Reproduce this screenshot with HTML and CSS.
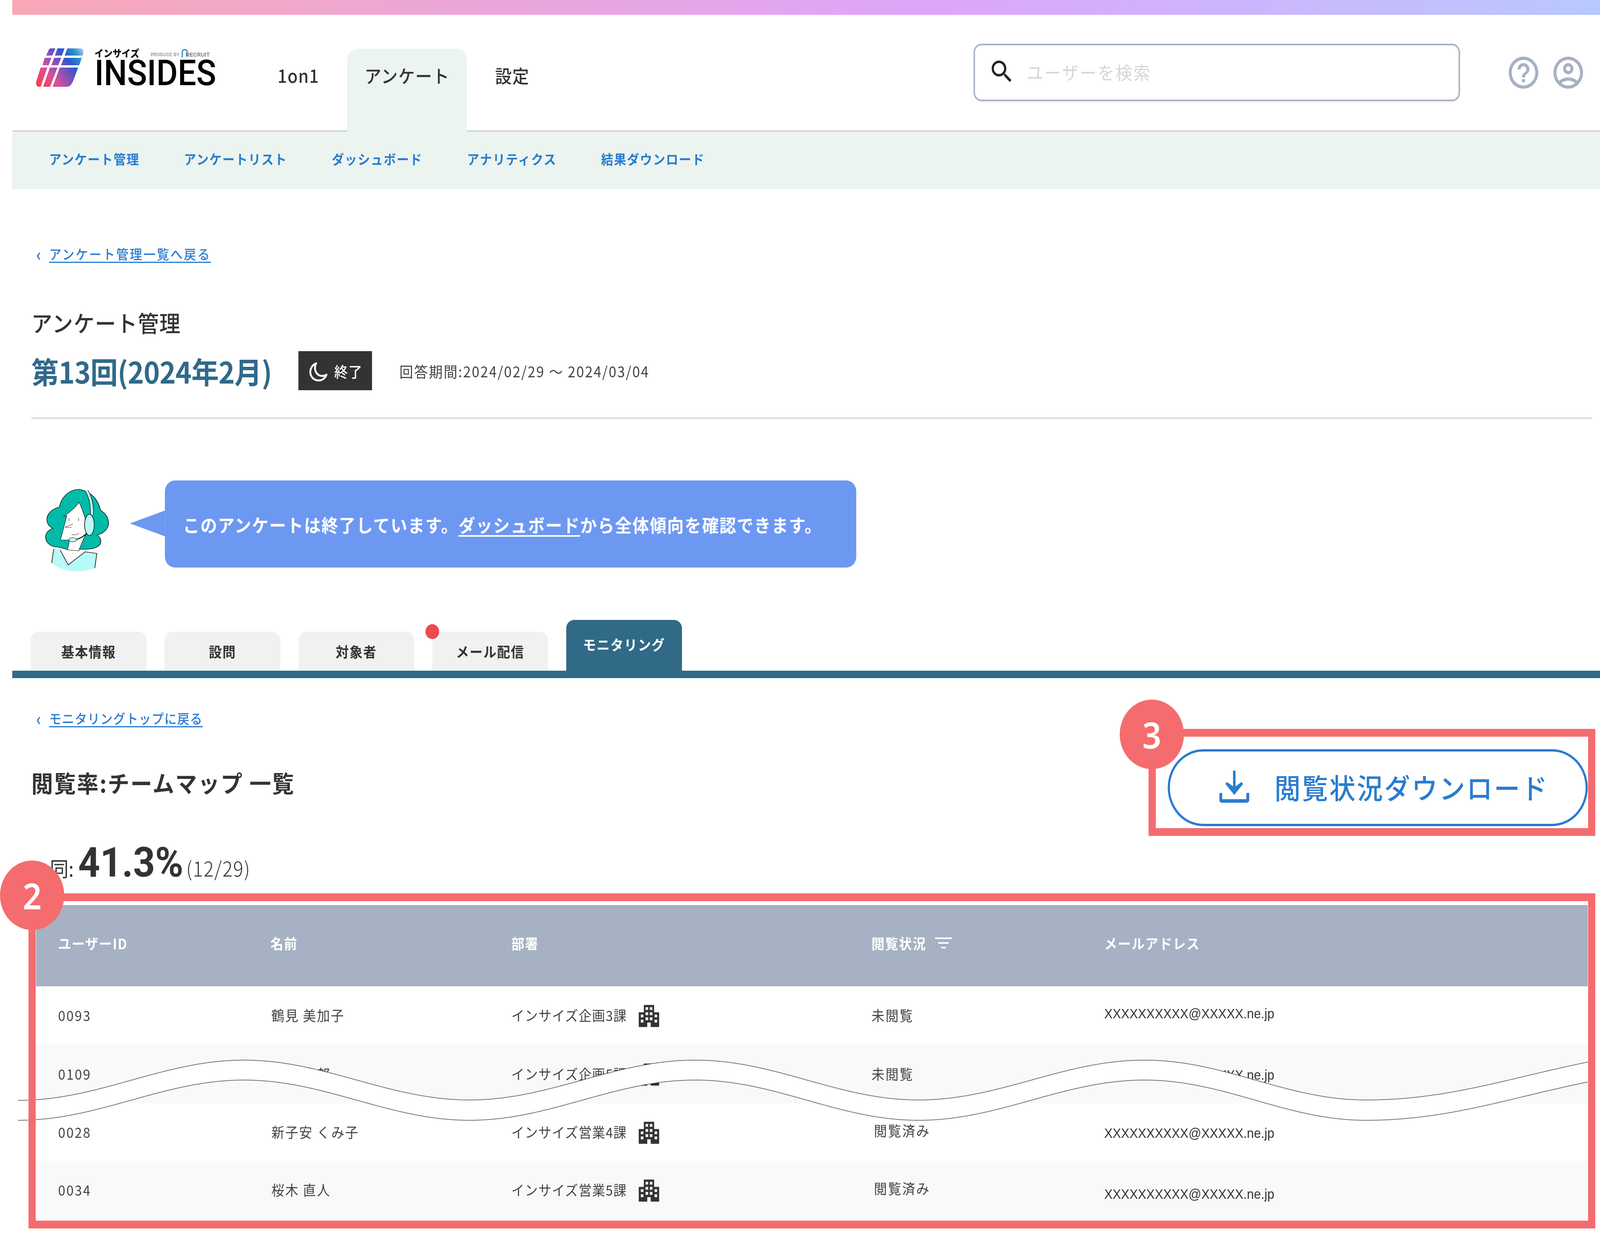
FILE: index.html
```html
<!DOCTYPE html>
<html lang="ja">
<head>
<meta charset="utf-8">
<title>INSIDES アンケート管理</title>
<link rel="stylesheet" href="styles.css">
</head>
<body>
<div class="page">
  <div class="topbar"></div>
  <header class="header">
    <div class="logo">
      <svg class="logo-mark" viewBox="55 70 390 300" preserveAspectRatio="none">
        <defs>
          <linearGradient id="lg" gradientUnits="userSpaceOnUse" x1="70" y1="368" x2="440" y2="70">
            <stop offset="0" stop-color="#fb3f4a"/>
            <stop offset=".3" stop-color="#d84f9c"/>
            <stop offset=".5" stop-color="#8550b8"/>
            <stop offset=".68" stop-color="#2e56d2"/>
            <stop offset=".85" stop-color="#2a93c4"/>
            <stop offset="1" stop-color="#bccdfa"/>
          </linearGradient>
        </defs>
        <g fill="url(#lg)">
          <path d="M178 72H215L190 128H140L160 85Q166 72 178 72Z"/>
          <path d="M232 72H290L268 128H210Z"/>
          <path d="M312 72H415Q442 72 442 100L438 128H290Z"/>
          <path d="M128 145H182L160 202H110Z"/>
          <path d="M205 145H262L238 202H182Z"/>
          <path d="M285 145H430L408 202H260Z"/>
          <path d="M95 220H150L95 368H78Q52 362 60 325Z"/>
          <path d="M170 220H232L172 368H115Z"/>
          <path d="M250 220H400L358 325Q340 368 305 368H192Z"/>
        </g>
      </svg>
      <div class="logo-text">
        <div class="logo-top">
          <span class="logo-kana">インサイズ</span>
          <span class="logo-by">PRODUCE BY</span>
          <svg class="logo-arc" viewBox="0 0 17 22"><path d="M2 22V9Q2 2 9 2T16 9V20" fill="none" stroke="#1f86c8" stroke-width="3"/></svg>
          <span class="logo-recruit">RECRUIT</span>
        </div>
        <div class="logo-name">INSIDES</div>
      </div>
    </div>
    <nav class="nav">
      <a class="nav-item">1on1</a>
      <a class="nav-item nav-active">アンケート</a>
      <a class="nav-item">設定</a>
    </nav>
    <div class="search">
      <svg class="search-icon" viewBox="3 3 17.5 17.5"><path fill="#222" d="M15.5 14h-.79l-.28-.27A6.471 6.471 0 0 0 16 9.5 6.5 6.5 0 1 0 9.5 16c1.61 0 3.09-.59 4.23-1.57l.27.28v.79l5 4.99L20.49 19l-4.99-5zm-6 0C7.01 14 5 11.99 5 9.5S7.01 5 9.5 5 14 7.01 14 9.5 11.99 14 9.5 14z"/></svg>
      <span class="search-text">ユーザーを検索</span>
    </div>
    <div class="head-icons">
      <svg class="head-icon" viewBox="2 2 20 20"><path fill="#a6b1c3" d="M11 18h2v-2h-2v2zm1-16C6.48 2 2 6.48 2 12s4.48 10 10 10 10-4.48 10-10S17.52 2 12 2zm0 18c-4.41 0-8-3.59-8-8s3.59-8 8-8 8 3.59 8 8-3.59 8-8 8zm0-14c-2.21 0-4 1.79-4 4h2c0-1.1.9-2 2-2s2 .9 2 2c0 2-3 1.75-3 5h2c0-2.25 3-2.5 3-5 0-2.21-1.79-4-4-4z"/></svg>
      <svg class="head-icon" viewBox="2 2 20 20"><path fill="#a6b1c3" d="M12 2C6.48 2 2 6.48 2 12s4.48 10 10 10 10-4.48 10-10S17.52 2 12 2zM7.35 18.5C8.66 17.56 10.26 17 12 17s3.34.56 4.65 1.5C15.34 19.44 13.74 20 12 20s-3.34-.56-4.65-1.5zm10.79-1.38C16.45 15.8 14.32 15 12 15s-4.45.8-6.14 2.12C4.7 15.73 4 13.95 4 12c0-4.42 3.58-8 8-8s8 3.58 8 8c0 1.95-.7 3.73-1.86 5.12zM12 6c-1.93 0-3.5 1.57-3.5 3.5S10.07 13 12 13s3.5-1.57 3.5-3.5S13.93 6 12 6zm0 5c-.83 0-1.5-.67-1.5-1.5S11.17 8 12 8s1.5.67 1.5 1.5S12.83 11 12 11z"/></svg>
    </div>
  </header>
  <nav class="subnav">
    <a>アンケート管理</a>
    <a>アンケートリスト</a>
    <a>ダッシュボード</a>
    <a>アナリティクス</a>
    <a>結果ダウンロード</a>
  </nav>

  <div class="back back-first"><span class="chev">‹</span><a>アンケート管理一覧へ戻る</a></div>
  <h1 class="h-main">アンケート管理</h1>
  <div class="round-row">
    <h2 class="round-title">第13回(2024年2月)</h2>
    <div class="tag">
      <svg class="tag-moon" viewBox="0 0 50 50"><path d="M19 3C8 8 2 17 3 27 4 39 14 47 26 47 36 47 44 41 48 32 42 36 33 37 26 33 16 27 13 14 19 3Z" fill="none" stroke="#fff" stroke-width="5" stroke-linejoin="round"/></svg>
      <span>終了</span>
    </div>
    <div class="period">回答期間:2024/02/29 〜 2024/03/04</div>
  </div>
  <hr class="rule">

  <div class="notice">
    <svg class="avatar" viewBox="130 210 410 650" preserveAspectRatio="none">
      <path d="M190 678L178 785C220 830 270 850 330 850 380 850 420 840 445 825L458 712 385 700 280 800 230 685Z" fill="#b8fbf6"/>
      <path d="M190 678L178 785M445 825L458 712 385 700 280 800 230 685" fill="none" stroke="#111" stroke-width="4"/>
      <path d="M350 218C290 218 240 270 225 355 170 372 140 420 150 470 155 495 170 510 185 518 150 535 130 570 145 615 160 650 190 665 215 662L275 682 345 682 360 680C400 680 460 680 478 640 490 610 475 585 460 570 510 555 535 510 530 465 525 420 500 395 480 378 470 320 440 240 350 218Z" fill="#00bba8" stroke="#111" stroke-width="4"/>
      <path d="M348 318C320 365 290 395 250 428L272 420 232 608 288 610 276 684 345 692 375 600 392 560 385 440C375 400 360 350 348 318Z" fill="#fff" stroke="#111" stroke-width="3"/>
      <path d="M395 230Q430 300 428 415" fill="none" stroke="#111" stroke-width="22"/>
      <path d="M395 230Q430 300 428 415" fill="none" stroke="#b8fbf6" stroke-width="15"/>
      <ellipse cx="412" cy="492" rx="30" ry="82" fill="#b8fbf6" stroke="#111" stroke-width="4"/>
      <path d="M330 605Q370 590 392 560" fill="none" stroke="#111" stroke-width="7"/>
      <ellipse cx="308" cy="607" rx="25" ry="16" fill="#b8fbf6" stroke="#111" stroke-width="3"/>
      <path d="M285 442V462M345 442V462M260 510L310 485M262 512H300M300 565Q325 575 348 558" fill="none" stroke="#333" stroke-width="3"/>
    </svg>
    <div class="bubble">
      <span>このアンケートは終了しています。<a class="bubble-link">ダッシュボード</a>から全体傾向を確認できます。</span>
    </div>
  </div>

  <div class="tabs">
    <a class="tab">基本情報</a>
    <a class="tab">設問</a>
    <a class="tab">対象者</a>
    <a class="tab tab-dot">メール配信</a>
    <a class="tab tab-active">モニタリング</a>
  </div>

  <div class="back back-second"><span class="chev">‹</span><a>モニタリングトップに戻る</a></div>

  <div class="title-row">
    <h2 class="h-rate">閲覧率:チームマップ 一覧</h2>
    <button class="dl-btn">
      <svg class="dl-icon" viewBox="0 0 83 82"><path fill="#2a7ccf" d="M38 0H45V40L62 29 66 34 41.500 62 17 34 21 29 38 40ZM0 57H8V73H75V57H83V74Q83 82 75 82H8Q0 82 0 74Z"/></svg>
      <span>閲覧状況ダウンロード</span>
    </button>
  </div>

  <div class="stat">
    <span class="stat-label">同:</span>
    <span class="stat-num">41.3%</span>
    <span class="stat-sub">(12/29)</span>
  </div>

  <div class="table">
    <div class="thead">
      <div>ユーザーID</div>
      <div>名前</div>
      <div>部署</div>
      <div class="th-filter">閲覧状況
        <svg class="filter-icon" viewBox="0 0 47 30"><path d="M0 3H47M9 15H38M17 27H30" stroke="#fff" stroke-width="4" fill="none"/></svg>
      </div>
      <div>メールアドレス</div>
    </div>
    <div class="tr">
      <div class="c-id">0093</div><div class="c-name">鶴見 美加子</div>
      <div class="dept">インサイズ企画3課<svg class="bld" viewBox="0 0 24 24"><use href="#bld"/></svg></div>
      <div class="c-status">未閲覧</div><div class="mail mail-up">XXXXXXXXXX@XXXXX.ne.jp</div>
    </div>
    <div class="tr tr-alt">
      <div class="c-id">0109</div><div class="c-name">山川 太郎</div>
      <div class="dept">インサイズ企画5課<svg class="bld" viewBox="0 0 24 24"><use href="#bld"/></svg></div>
      <div class="c-status">未閲覧</div><div class="mail mail-down">XXXXXXXXXX@XXXXX.ne.jp</div>
    </div>
    <div class="tr tr-short">
      <div class="c-id">0028</div><div class="c-name">新子安 くみ子</div>
      <div class="dept">インサイズ営業4課<svg class="bld" viewBox="0 0 24 24"><use href="#bld"/></svg></div>
      <div class="c-status viewed">閲覧済み</div><div class="mail mail-down">XXXXXXXXXX@XXXXX.ne.jp</div>
    </div>
    <div class="tr tr-alt tr-last">
      <div class="c-id">0034</div><div class="c-name">桜木 直人</div>
      <div class="dept">インサイズ営業5課<svg class="bld" viewBox="0 0 24 24"><use href="#bld"/></svg></div>
      <div class="c-status viewed">閲覧済み</div><div class="mail mail-down2">XXXXXXXXXX@XXXXX.ne.jp</div>
    </div>
  </div>

  <svg class="sprite" width="0" height="0">
    <symbol id="bld" viewBox="0 0 24 24">
      <path fill="#333" fill-rule="evenodd" d="M6 0H18V8H24V24H14V19H10V24H0V8H6ZM8 2.500V5.500H11V2.500ZM13 2.500V5.500H16V2.500ZM8 8V11H11V8ZM13 8V11H16V8ZM2.500 10.500V13.500H5.500V10.500ZM18.500 10.500V13.500H21.500V10.500ZM8 13.500V16.500H11V13.500ZM13 13.500V16.500H16V13.500ZM2.500 16V19H5.500V16ZM18.500 16V19H21.500V16Z"/>
    </symbol>
  </svg>

  <svg class="wave" viewBox="0 0 4349 180">
    <path fill="#fff" d="M0 117C225 117 400 14 625 14S1025 116 1250 116 1650 14 1875 14 2270 116 2495 116 2895 14 3120 14 3510 116 3735 116 4130 60 4349 19V70C4130 111 3960 168 3735 168S3345 65 3120 65 2720 168 2495 168 2100 65 1875 65 1475 168 1250 168 850 65 625 65 225 168 0 168Z"/>
    <path class="wave-line" d="M0 117C225 117 400 14 625 14S1025 116 1250 116 1650 14 1875 14 2270 116 2495 116 2895 14 3120 14 3510 116 3735 116 4130 60 4349 19"/>
    <path class="wave-line" d="M0 168C225 168 400 65 625 65S1025 168 1250 168 1650 65 1875 65 2270 168 2495 168 2895 65 3120 65 3510 168 3735 168 4130 111 4349 70"/>
  </svg>

  <div class="mark mark-table"></div>
  <div class="mark mark-btn"></div>
  <div class="badge badge-table">2</div>
  <div class="badge badge-btn">3</div>
</div>
</body>
</html>
```

FILE: styles.css
```css
* { box-sizing: border-box; }
html, body { margin: 0; padding: 0; background: #fff; overflow: hidden; }
body { font-family: "Noto Sans CJK JP", "Noto Sans", sans-serif; color: #333; }
h1, h2 { margin: 0; }
a { color: inherit; }

.page { position: relative; width: 4434px; height: 3218px; overflow: hidden; transform: scaleX(0.92377); transform-origin: 0 0; }

.topbar { height: 38px; margin-left: 34px; background: linear-gradient(90deg, #f8a8b6 0%, #dea5fb 58%, #b8c8ff 100%); }

.header { display: flex; align-items: flex-start; height: 299px; margin-left: 34px; padding-left: 65px; border-bottom: 3px solid #cccccc; }

.logo { display: flex; gap: 30px; margin-top: 85px; width: 622px; }
.logo-mark { width: 133px; height: 100px; }
.logo-text { display: flex; flex-direction: column; }
.logo-top { display: flex; align-items: flex-end; height: 24px; }
.logo-kana { font-size: 25px; line-height: 24px; font-weight: 900; color: #111; }
.logo-by { font-family: "Liberation Sans", sans-serif; font-size: 12px; line-height: 14px; color: #9a9a9a; font-weight: 700; margin-left: 31px; white-space: nowrap; }
.logo-arc { width: 17px; height: 22px; margin-left: 6px; }
.logo-recruit { font-family: "Liberation Sans", sans-serif; font-size: 15px; line-height: 14px; color: #6f7f87; font-weight: 700; margin-left: -6px; }
.logo-name { font-family: Roboto, sans-serif; font-size: 91px; line-height: 76px; font-weight: 500; color: #000; margin-top: 2px; }

.nav { display: flex; gap: 30px; margin-top: 87px; height: 212px; }
.nav-item { padding: 0 48px; height: 212px; font-size: 46px; line-height: 134px; font-weight: 500; letter-spacing: 1.500px; color: #333; white-space: nowrap; }
.nav-active { background: #ecf4ef; border-radius: 28px 28px 0 0; }

.search { display: flex; align-items: center; margin-left: auto; margin-top: 74px; width: 1348px; height: 147px; border: 4px solid #a6b1c3; border-radius: 22px; padding: 0 0 6px 46px; box-shadow: 0 3px 6px rgba(0,0,0,.06); }
.search-icon { width: 55px; height: 55px; }
.search-text { margin-left: 42px; font-size: 46px; letter-spacing: 3.500px; color: #d6d6d6; }

.head-icons { display: flex; gap: 42px; margin: 107px 47px 0 135px; }
.head-icon { width: 82px; height: 82px; }

.subnav { display: flex; align-items: center; gap: 123px; height: 147px; margin-left: 34px; padding: 0 0 8px 102px; background: #ecf4ef; font-size: 34px; font-weight: 700; letter-spacing: 2px; color: #2a7ccf; }

.back { display: flex; align-items: center; margin-left: 100px; height: 50px; font-size: 34px; letter-spacing: 3px; font-weight: 500; color: #2a7ccf; }
.back a { text-decoration: underline; text-underline-offset: 6px; text-decoration-thickness: 3px; }
.chev { width: 36px; font-size: 46px; line-height: 50px; }
.back-first { margin-top: 140px; letter-spacing: 3.500px; }
.back-second { margin-top: 77px; letter-spacing: 1.500px; }

.h-main { margin: 116px 0 0 87px; font-size: 58px; line-height: 70px; font-weight: 500; letter-spacing: 1.500px; color: #333; }

.round-row { display: flex; align-items: center; margin: 39px 0 0 87px; height: 100px; }
.round-title { width: 740px; font-size: 76px; font-weight: 700; line-height: 100px; letter-spacing: -0.700px; color: #30698a; white-space: nowrap; }
.tag { display: flex; align-items: center; gap: 19px; width: 204px; height: 100px; padding-left: 30px; background: #333; color: #fff; font-size: 38px; font-weight: 500; letter-spacing: 2px; }
.tag-moon { width: 50px; height: 50px; margin-top: 6px; }
.period { margin-left: 76px; font-size: 38px; letter-spacing: 2.800px; color: #444; white-space: nowrap; }

.rule { margin: 70px 22px 0 87px; height: 3px; border: 0; background: #cfcfcf; }

.notice { display: flex; align-items: flex-start; margin: 158px 0 0 122px; height: 223px; }
.avatar { width: 183px; height: 216px; margin-top: 20px; }
.bubble { position: relative; display: flex; align-items: center; width: 1916px; height: 223px; margin-left: 152px; padding-left: 50px; background: #6d98f2; border-radius: 28px; color: #fff; font-size: 46px; font-weight: 700; letter-spacing: 2.200px; white-space: nowrap; }
.bubble::before { content: ""; position: absolute; left: -97px; top: 77px; border-style: solid; border-width: 33px 97px 33px 0; border-color: transparent #6d98f2 transparent transparent; }
.bubble-link { text-decoration: underline; text-underline-offset: 8px; text-decoration-thickness: 4px; }

.tabs { display: flex; align-items: flex-end; gap: 50px; height: 149px; margin: 134px 0 0 34px; padding-left: 51px; border-bottom: 19px solid #316a87; }
.tab { position: relative; display: flex; align-items: center; justify-content: center; width: 321px; height: 100px; background: #f1f1f1; border-radius: 22px 22px 0 0; font-size: 36px; font-weight: 700; letter-spacing: 2px; color: #333; }
.tab-active { height: 130px; padding-bottom: 6px; background: #316a87; color: #fff; }
.tab-dot::before { content: ""; position: absolute; left: -19px; top: -19px; width: 38px; height: 38px; border-radius: 50%; background: #ec4a4f; }

.title-row { display: flex; justify-content: space-between; align-items: flex-start; margin: 55px 34px 0 87px; height: 197px; }
.h-rate { margin-top: 45px; font-size: 60px; line-height: 80px; font-weight: 700; letter-spacing: 3px; color: #333; }
.dl-btn { display: flex; align-items: center; width: 1164px; height: 197px; padding: 0 0 6px 137px; gap: 70px; background: #fff; border: 6px solid #2a7ccf; border-radius: 99px; font-family: inherit; font-size: 72px; font-weight: 500; letter-spacing: 4px; color: #2a7ccf; white-space: nowrap; }
.dl-icon { width: 83px; height: 82px; }

.stat { display: flex; align-items: baseline; margin: 23px 0 0 138px; height: 179px; color: #333; }
.stat-label { font-size: 52px; line-height: 140px; margin-right: 12px; }
.stat-num { font-family: Roboto, sans-serif; font-size: 106px; line-height: 140px; font-weight: 700; }
.stat-sub { margin-left: 8px; font-size: 52px; line-height: 140px; letter-spacing: 2px; font-weight: 300; }

.table { margin-left: 100px; width: 4300px; height: 808px; }
.thead, .tr { display: grid; grid-template-columns: 588px 668px 998px 645px 1fr; padding-left: 61px; align-items: center; }
.thead { height: 208px; background: #a6b1c3; color: #fff; font-size: 36px; font-weight: 700; letter-spacing: 2px; padding-bottom: 14px; }
.th-filter { display: flex; align-items: center; gap: 24px; }
.filter-icon { width: 47px; height: 30px; }
.tr { height: 150px; font-size: 36px; letter-spacing: 1.500px; color: #444; padding-bottom: 4px; background: #fff; }
.tr-alt { background: #f8f9fb; }
.tr-short { height: 147px; }
.tr-last { height: 154px; padding-bottom: 8px; }
.c-id { letter-spacing: 3px; }
.c-name { padding-left: 3px; letter-spacing: 2.500px; }
.c-status { letter-spacing: 3px; }
.dept { display: flex; align-items: center; gap: 33px; }
.bld { width: 57px; height: 58px; margin-top: 6px; }
.mail { font-family: "Liberation Sans", sans-serif; font-size: 35px; letter-spacing: 0; color: #333; }
.mail-up { padding-bottom: 6px; }
.mail-down { padding-top: 8px; }
.mail-down2 { padding-top: 24px; }
.viewed { padding: 0 0 8px 7px; }

.sprite { position: absolute; }

.wave { position: absolute; left: 51px; top: 2700px; width: 4349px; height: 180px; overflow: visible; }
.wave-line { fill: none; stroke: #111; stroke-width: 2; stroke-dasharray: 2 1.500; }

.mark { position: absolute; border: 20px solid #f46c6e; }
.mark-table { left: 79px; top: 2287px; width: 4342px; height: 858px; }
.mark-btn { left: 3183px; top: 1866px; width: 1238px; height: 274px; }

.badge { position: absolute; display: flex; align-items: center; justify-content: center; width: 178px; height: 178px; border-radius: 50%; background: #f46c6e; color: #fff; font-family: "Noto Sans", sans-serif; font-size: 92px; font-weight: 600; }
.badge-table { left: 0; top: 2203px; }
.badge-btn { left: 3103px; top: 1791px; }
```
